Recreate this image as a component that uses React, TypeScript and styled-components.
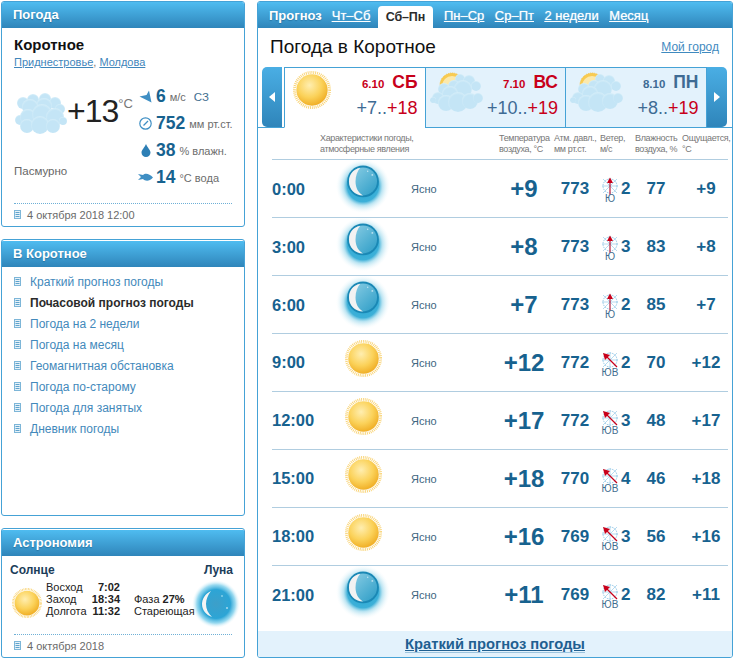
import React, { useId } from "react";
import styled, { createGlobalStyle } from "styled-components";

const Global = createGlobalStyle`
  html, body { margin: 0; padding: 0; background: #fff; }
  body { font-family: "Liberation Sans", Arial, sans-serif; color: #333; }
  a { color: inherit; }
`;

const Page = styled.div`
  display: flex;
  gap: 12px;
  width: 733px;
  height: 658px;
  padding: 1px 0 0 1px;
  box-sizing: border-box;
  overflow: hidden;
`;
const Sidebar = styled.div`
  display: flex;
  flex-direction: column;
  width: 244px;
`;
const Panel = styled.section<{ $h: number; $mb?: number }>`
  display: flex;
  flex-direction: column;
  height: ${(p) => p.$h}px;
  margin-bottom: ${(p) => p.$mb ?? 0}px;
  box-sizing: border-box;
  border: 1px solid #45a2d6;
  border-radius: 3px;
  overflow: hidden;
  flex: none;
`;
const PanelHead = styled.h2<{ $gap?: boolean }>`
  margin: ${(p) => (p.$gap ? "1px" : "0")} 0 0;
  height: 26px;
  flex: none;
  padding-left: 11px;
  font-size: 13px;
  line-height: 26px;
  font-weight: bold;
  color: #fff;
  text-shadow: 0 1px 1px rgba(20, 80, 120, 0.45);
  background: linear-gradient(#4fbcf0, #2f85ba);
`;
const Body = styled.div`
  padding: 8px 12px 0;
  flex: 1;
`;
const City = styled.div`
  font-size: 15px;
  line-height: 18px;
  font-weight: bold;
  color: #111;
`;
const Region = styled.div`
  margin-top: 1px;
  font-size: 11px;
  line-height: 15px;
  color: #777;
  a { color: #3f86bb; }
`;
const NowGrid = styled.div`
  display: flex;
  margin-top: 13px;
`;
const NowLeft = styled.div`
  width: 126px;
  flex: none;
`;
const NowTemp = styled.div`
  display: flex;
  align-items: flex-start;
  height: 60px;
  padding-top: 9px;
  box-sizing: border-box;
`;
const CloudSlot = styled.div`
  width: 53px;
  flex: none;
  margin-top: 1px;
`;
const BigTemp = styled.span`
  font-size: 32px;
  line-height: 38px;
  color: #222;
  letter-spacing: -1px;
`;
const Degree = styled.span`
  font-size: 13px;
  line-height: 18px;
  color: #777;
  margin-top: 3px;
`;
const Cond = styled.div`
  margin-top: 21px;
  font-size: 11.5px;
  line-height: 14px;
  color: #666;
`;
const DetailList = styled.div`
  display: flex;
  flex-direction: column;
`;
const Detail = styled.div`
  display: flex;
  align-items: center;
  height: 27px;
  font-size: 11px;
  color: #6d6d6d;
  white-space: nowrap;
`;
const DetailIcon = styled.span`
  display: flex;
  justify-content: center;
  width: 15px;
  margin-right: 3px;
  margin-left: -2px;
`;
const DetailValue = styled.b`
  font-size: 17.5px;
  color: #17628f;
  margin-right: 4px;
`;
const WindDir = styled.span`
  color: #3f6e8f;
  font-size: 11.5px;
  margin-left: 8px;
`;
const Stamp = styled.div`
  display: flex;
  align-items: center;
  gap: 6px;
  margin: 0 12px;
  height: 21px;
  padding-bottom: 1px;
  box-sizing: content-box;
  border-top: 1px dotted #6fb0d6;
  font-size: 11px;
  color: #6a6a6a;
  flex: none;
`;
const Menu = styled.ul`
  list-style: none;
  margin: 0;
  padding: 4px 0 0 12px;
`;
const MenuItem = styled.li<{ $active?: boolean }>`
  display: flex;
  align-items: center;
  gap: 9px;
  height: 21px;
  font-size: 12px;
  font-weight: ${(p) => (p.$active ? "bold" : "normal")};
  color: ${(p) => (p.$active ? "#2b2b2b" : "#4389bb")};
`;
const AstroBody = styled.div`
  flex: 1;
  position: relative;
  padding: 6px 8px 0;
`;
const AstroTitles = styled.div`
  display: flex;
  justify-content: space-between;
  padding-right: 3px;
  font-size: 12px;
  line-height: 16px;
  font-weight: bold;
  color: #1b3d5a;
`;
const AstroRow = styled.div`
  display: flex;
  margin-top: 3px;
`;
const SunSlot = styled.div`
  width: 36px;
  flex: none;
  box-sizing: border-box;
  padding: 7px 0 0 2px;
`;
const AstroTable = styled.div`
  font-size: 11px;
  line-height: 12px;
  color: #222;
  width: 74px;
  flex: none;
`;
const AstroLine = styled.div`
  display: flex;
  justify-content: space-between;
  white-space: nowrap;
  b { color: #222; font-size: 11px; }
`;
const Phase = styled.div`
  margin: 12px 0 0 14px;
  font-size: 11px;
  line-height: 12px;
  color: #222;
  white-space: nowrap;
`;
const MoonOver = styled.div`
  position: absolute;
  right: 4px;
  top: 24px;
`;

const Main = styled.section`
  display: flex;
  flex-direction: column;
  width: 476px;
  height: 657px;
  box-sizing: border-box;
  border: 1px solid #45a2d6;
  border-radius: 3px;
  overflow: hidden;
  flex: none;
`;
const TabBar = styled.nav`
  display: flex;
  align-items: flex-end;
  height: 26px;
  flex: none;
  padding-left: 11px;
  font-size: 13px;
  color: #fff;
  background: linear-gradient(#4fbcf0, #2f85ba);
`;
const TabLabel = styled.b`
  line-height: 24px;
  margin-right: 10px;
  text-shadow: 0 1px 1px rgba(20, 80, 120, 0.45);
`;
const TabLink = styled.a`
  line-height: 24px;
  margin-right: 10.500px;
  color: #fff;
  text-shadow: 0 0 1px rgba(255, 255, 255, 0.7);
`;
const TabActive = styled.span`
  height: 22px;
  width: 55px;
  margin: 0 11px 0 -3px;
  text-align: center;
  line-height: 22px;
  border-radius: 4px 4px 0 0;
  background: #fff;
  color: #2b2b2b;
  font-weight: bold;
  font-size: 12.500px;
  letter-spacing: -0.1px;
`;
const TitleRow = styled.div`
  display: flex;
  align-items: center;
  justify-content: space-between;
  height: 39px;
  flex: none;
  padding: 0 13px 2px 12px;
  box-sizing: border-box;
`;
const PageTitle = styled.h1`
  margin: 0;
  font-size: 19px;
  line-height: 24px;
  font-weight: normal;
  color: #111;
`;
const MyCity = styled.a`
  font-size: 12px;
  color: #3f8abf;
`;
const Strip = styled.div`
  display: flex;
  height: 61px;
  flex: none;
  padding-left: 4px;
  box-shadow: inset 0 -1px 0 #45a2d6;
`;
const Arrow = styled.div<{ $side: "left" | "right" }>`
  display: flex;
  align-items: center;
  justify-content: center;
  width: 20px;
  height: 60px;
  flex: none;
  margin: ${(p) => (p.$side === "left" ? "0 2px 0 0" : "0 0 0 1.5px")};
  background: linear-gradient(#4aaee4, #2f85ba);
  border-radius: ${(p) => (p.$side === "left" ? "5px 0 0 5px" : "0 5px 5px 0")};
`;
const Day = styled.div<{ $active?: boolean }>`
  display: flex;
  justify-content: space-between;
  width: 141.500px;
  box-sizing: border-box;
  height: 61px;
  flex: none;
  margin-right: -1px;
  padding: 0 7px 0 3px;
  border: 1px solid #45a2d6;
  border-bottom: ${(p) => (p.$active ? "1px solid #fff" : "1px solid #45a2d6")};
  background: ${(p) => (p.$active ? "#fff" : "#e3f2fc")};
`;
const DayIcon = styled.div<{ $sun?: boolean }>`
  margin: ${(p) => (p.$sun ? "3px 0 0 5px" : "3px 0 0 1px")};
`;
const DayInfo = styled.div`
  display: flex;
  flex-direction: column;
  align-items: flex-end;
`;
const DayHead = styled.div<{ $red: boolean }>`
  display: flex;
  align-items: baseline;
  gap: 8px;
  height: 30px;
  padding-top: 4px;
  box-sizing: border-box;
  font-weight: bold;
  color: ${(p) => (p.$red ? "#c8001a" : "#3e6b94")};
`;
const DayDate = styled.span`
  font-size: 11.500px;
`;
const DayName = styled.span`
  font-size: 17.500px;
  line-height: 20px;
`;
const DayTemps = styled.div`
  font-size: 18px;
  line-height: 20px;
  color: #3e6b94;
  white-space: nowrap;
  span { color: #c8001a; }
`;
const ColumnHead = styled.div`
  display: grid;
  grid-template-columns: 179px 55px 46px 35px 47px 50px;
  height: 31px;
  flex: none;
  padding: 5px 0 0 62px;
  box-sizing: border-box;
  font-size: 9px;
  line-height: 11px;
  color: #777;
  letter-spacing: -0.35px;
  white-space: nowrap;
`;
const Rows = styled.div`
  flex: 1;
  padding: 0 4px 0 14px;
`;
const Row = styled.div`
  display: grid;
  grid-template-columns: 48px 86px 88px 60px 42px 40px 40px 52px;
  align-items: center;
  height: 58px;
  box-sizing: border-box;
  border-top: 1px solid #b0cde0;
  color: #17628f;
  font-weight: bold;
  font-size: 17px;
`;
const Time = styled.div`
  font-size: 16.500px;
`;
const IconCell = styled.div<{ $lift: number }>`
  display: flex;
  justify-content: center;
  padding-bottom: ${(p) => p.$lift}px;
`;
const Phenom = styled.div`
  padding-left: 5px;
  font-size: 11px;
  font-weight: normal;
  color: #40667f;
`;
const TempCell = styled.div`
  font-size: 24px;
  text-align: center;
`;
const Centered = styled.div`
  text-align: center;
`;
const WindCell = styled.div`
  display: flex;
  align-items: center;
  padding-left: 5px;
`;
const Dial = styled.div`
  position: relative;
  width: 18px;
  height: 18px;
  flex: none;
  margin: -6px 2px 0 0;
`;
const DialLabel = styled.span`
  position: absolute;
  left: 50%;
  top: 16px;
  transform: translateX(-50%);
  font-size: 10px;
  line-height: 12px;
  font-weight: normal;
  color: #3f6e8f;
`;
const Feels = styled.div`
  text-align: center;
  padding-left: 8px;
`;
const Foot = styled.div`
  height: 26px;
  flex: none;
  display: flex;
  align-items: center;
  justify-content: center;
  background: #e3f2fc;
`;
const FootLink = styled.a`
  font-size: 14.750px;
  line-height: 16px;
  font-weight: bold;
  color: #1f6091;
  border-bottom: 1px solid #9cc4de;
`;

const DocIcon = () => (
  <svg width="7" height="9" viewBox="0 0 7 9" style={{ flex: "none" }}>
    <rect x="0.5" y="0.5" width="6" height="8" fill="#e6f2f9" stroke="#7db6d8" />
    <path d="M1.5 2.5h4M1.5 4.5h4M1.5 6.5h4" stroke="#5fa3cc" strokeWidth="1" />
  </svg>
);

const Sun = ({ size = 40 }: { size?: number }) => {
  const id = useId();
  return (
    <svg width={size} height={size} viewBox="0 0 40 40">
      <defs>
        <radialGradient id={id} cx="0.42" cy="0.35" r="0.7">
          <stop offset="0" stopColor="#ffeeb0" />
          <stop offset="0.55" stopColor="#fbd25a" />
          <stop offset="1" stopColor="#eea91e" />
        </radialGradient>
      </defs>
      <circle cx="20" cy="20" r="18.500" fill="none" stroke="#f9d477" strokeWidth="3" strokeDasharray="1 1" />
      <circle cx="20" cy="20" r="16.500" fill={`url(#${id})`} />
    </svg>
  );
};

const Moon = ({ size = 60 }: { size?: number }) => {
  const id = useId();
  return (
    <svg width={size} height={size} viewBox="0 0 60 60">
      <defs>
        <radialGradient id={`${id}g`}>
          <stop offset="0" stopColor="#22a5d2" />
          <stop offset="0.58" stopColor="#3db0d8" />
          <stop offset="0.72" stopColor="#a5dcee" stopOpacity="0.75" />
          <stop offset="1" stopColor="#eef9fc" stopOpacity="0" />
        </radialGradient>
        <linearGradient id={`${id}d`} x1="0" y1="0" x2="1" y2="1">
          <stop offset="0" stopColor="#8fd0e6" />
          <stop offset="1" stopColor="#2b9cc6" />
        </linearGradient>
      </defs>
      <ellipse cx="30" cy="28" rx="29" ry="29" fill={`url(#${id}g)`} />
      <circle cx="30" cy="23" r="17" fill="#1a88b5" />
      <circle cx="30" cy="23" r="15" fill={`url(#${id}d)`} />
      <path d="M27 8.300C19 10 15 16 15 23c0 8 6 15 15 15-5-3-8-8-8-15 0-6 2-11 5-14.700Z" fill="#f2f2f2" />
      <circle cx="40" cy="16" r="1" fill="#e5f5fb" opacity="0.7" />
      <circle cx="35" cy="12" r="0.8" fill="#e5f5fb" opacity="0.7" />
    </svg>
  );
};

const AstroMoon = () => {
  const id = useId();
  return (
    <svg width="48" height="48" viewBox="0 0 48 48">
      <defs>
        <radialGradient id={id}>
          <stop offset="0" stopColor="#3d9fc9" />
          <stop offset="0.6" stopColor="#2ca5d6" />
          <stop offset="0.8" stopColor="#7fd0ec" stopOpacity="0.8" />
          <stop offset="1" stopColor="#e6f6fb" stopOpacity="0" />
        </radialGradient>
      </defs>
      <circle cx="24" cy="24" r="24" fill={`url(#${id})`} />
      <path d="M19 11C13 14 10 19 10 24c0 6 4 11 10 13-4-4-6-8-6-13 0-5 2-9 5-13Z" fill="#f4f4f4" />
      <circle cx="35" cy="28" r="0.8" fill="#fff" />
      <circle cx="30" cy="16" r="0.7" fill="#dff" />
    </svg>
  );
};

const Puffs = ({ puffs, fill }: { puffs: [number, number, number][]; fill: string }) => (
  <>
    {puffs.map(([x, y, r], i) => (
      <circle key={i} cx={x} cy={y} r={r} fill={fill} />
    ))}
  </>
);

const CloudGradient = ({ id }: { id: string }) => (
  <radialGradient id={id} cx="0.5" cy="0.55" r="0.55">
    <stop offset="0" stopColor="#c4e5f6" />
    <stop offset="0.75" stopColor="#c4e5f6" />
    <stop offset="1" stopColor="#d6eef9" />
  </radialGradient>
);

const Cloud = () => {
  const id = useId();
  return (
    <svg width="54" height="42" viewBox="0 0 54 42">
      <defs>
        <CloudGradient id={id} />
      </defs>
      <Puffs
        fill={`url(#${id})`}
        puffs={[
          [9, 10, 6], [19, 7, 6], [31, 6, 6], [41, 10, 6], [46, 16, 5], [30, 13, 8], [16, 14, 8],
          [6, 27, 5], [14, 24, 8], [28, 21, 10], [41, 24, 9], [13, 33, 7], [26, 32, 9], [39, 33, 7], [49, 28, 4],
        ]}
      />
    </svg>
  );
};

const SunCloud = () => {
  const id = useId();
  return (
    <svg width="54" height="42" viewBox="0 0 54 42">
      <defs>
        <CloudGradient id={id} />
      </defs>
      <circle cx="22" cy="14" r="12" fill="#f8cb52" stroke="#f5c54e" strokeDasharray="1 1" />
      <circle cx="22" cy="15" r="10" fill="#fbe9ad" />
      <Puffs
        fill={`url(#${id})`}
        puffs={[
          [30, 8, 5], [39, 10, 6], [46, 15, 5], [24, 15, 6], [14, 18, 6], [33, 18, 9], [20, 23, 8],
          [8, 27, 6], [16, 32, 8], [28, 31, 10], [40, 30, 8], [48, 27, 5], [3, 29, 3],
        ]}
      />
    </svg>
  );
};

const WindDial = ({ dir }: { dir: "Ю" | "ЮВ" }) => (
  <Dial>
    <svg width="18" height="18" viewBox="0 0 18 18">
      <g stroke="#8fc6e6" strokeWidth="1" fill="none">
        <circle cx="9" cy="9" r="7" strokeDasharray="1.500 1" />
        <path d="M2 2l14 14M16 2 2 16M1 9h16M9 1v16" strokeOpacity="0.65" />
      </g>
      {dir === "Ю" ? (
        <g fill="#c8001a" stroke="#c8001a">
          <path d="M9 4v14" strokeWidth="1" />
          <path d="M9 0.500l3 5.500H6z" stroke="none" />
        </g>
      ) : (
        <g fill="#c8001a" stroke="#c8001a">
          <path d="M5 5l11 11" strokeWidth="1.200" />
          <path d="M2 2l7 2-5 5z" stroke="none" />
        </g>
      )}
    </svg>
    <DialLabel>{dir}</DialLabel>
  </Dial>
);

const Chevron = ({ dir }: { dir: "left" | "right" }) => (
  <svg width="6" height="10" viewBox="0 0 6 10">
    <path d={dir === "left" ? "M6 0v10L0 5z" : "M0 0v10l6-5z"} fill="#fff" />
  </svg>
);

const ICON_BLUE = "#3f8fc4";

const days = [
  { date: "6.10", name: "СБ", lo: "+7", hi: "+18", red: true, active: true },
  { date: "7.10", name: "ВС", lo: "+10", hi: "+19", red: true, active: false },
  { date: "8.10", name: "ПН", lo: "+8", hi: "+19", red: false, active: false },
];

type Hour = { t: string; icon: "moon" | "sun"; temp: string; p: number; dir: "Ю" | "ЮВ"; w: number; h: number };
const hours: Hour[] = [
  { t: "0:00", icon: "moon", temp: "+9", p: 773, dir: "Ю", w: 2, h: 77 },
  { t: "3:00", icon: "moon", temp: "+8", p: 773, dir: "Ю", w: 3, h: 83 },
  { t: "6:00", icon: "moon", temp: "+7", p: 773, dir: "Ю", w: 2, h: 85 },
  { t: "9:00", icon: "sun", temp: "+12", p: 772, dir: "ЮВ", w: 2, h: 70 },
  { t: "12:00", icon: "sun", temp: "+17", p: 772, dir: "ЮВ", w: 3, h: 48 },
  { t: "15:00", icon: "sun", temp: "+18", p: 770, dir: "ЮВ", w: 4, h: 46 },
  { t: "18:00", icon: "sun", temp: "+16", p: 769, dir: "ЮВ", w: 3, h: 56 },
  { t: "21:00", icon: "moon", temp: "+11", p: 769, dir: "ЮВ", w: 2, h: 82 },
];

const menu = [
  "Краткий прогноз погоды",
  "Почасовой прогноз погоды",
  "Погода на 2 недели",
  "Погода на месяц",
  "Геомагнитная обстановка",
  "Погода по-старому",
  "Погода для занятых",
  "Дневник погоды",
];

export default function App() {
  return (
    <Page>
      <Global />
      <Sidebar>
        <Panel $h={226} $mb={12}>
          <PanelHead>Погода</PanelHead>
          <Body>
            <City>Коротное</City>
            <Region>
              <a href="#r">Приднестровье</a>, <a href="#m">Молдова</a>
            </Region>
            <NowGrid>
              <NowLeft>
                <NowTemp>
                  <CloudSlot>
                    <Cloud />
                  </CloudSlot>
                  <BigTemp>+13</BigTemp>
                  <Degree>°C</Degree>
                </NowTemp>
                <Cond>Пасмурно</Cond>
              </NowLeft>
              <DetailList>
                <Detail>
                  <DetailIcon>
                    <svg width="13" height="13" viewBox="0 0 13 13">
                      <path d="M12.500 12.500 10 0.500 7.500 5 0.500 6.500Z" fill={ICON_BLUE} />
                    </svg>
                  </DetailIcon>
                  <DetailValue>6</DetailValue>м/с
                  <WindDir>СЗ</WindDir>
                </Detail>
                <Detail>
                  <DetailIcon>
                    <svg width="13" height="13" viewBox="0 0 13 13">
                      <circle cx="6.500" cy="6.500" r="5.700" fill="none" stroke={ICON_BLUE} strokeWidth="1.200" />
                      <path d="M4.500 8.500 9 4" stroke={ICON_BLUE} strokeWidth="1.200" />
                    </svg>
                  </DetailIcon>
                  <DetailValue>752</DetailValue>мм рт.ст.
                </Detail>
                <Detail>
                  <DetailIcon>
                    <svg width="10" height="13" viewBox="0 0 10 13">
                      <path d="M5 0C4 3 .5 6 .5 8.500a4.500 4.500 0 0 0 9 0C9.500 6 6 3 5 0Z" fill="#2d7fb5" />
                    </svg>
                  </DetailIcon>
                  <DetailValue>38</DetailValue>% влажн.
                </Detail>
                <Detail>
                  <DetailIcon>
                    <svg width="15" height="9" viewBox="0 0 15 9">
                      <path d="M0 1l3 3-3 3 5-1c2 2 6 3 10-1.500C11 0 7 0 5 2Z" fill={ICON_BLUE} />
                    </svg>
                  </DetailIcon>
                  <DetailValue>14</DetailValue>°C вода
                </Detail>
              </DetailList>
            </NowGrid>
          </Body>
          <Stamp>
            <DocIcon />4 октября 2018 12:00
          </Stamp>
        </Panel>

        <Panel $h={277} $mb={12}>
          <PanelHead $gap>В Коротное</PanelHead>
          <Menu>
            {menu.map((m, i) => (
              <MenuItem key={m} $active={i === 1}>
                <DocIcon />
                {m}
              </MenuItem>
            ))}
          </Menu>
        </Panel>

        <Panel $h={130}>
          <PanelHead $gap>Астрономия</PanelHead>
          <AstroBody>
            <AstroTitles>
              <span>Солнце</span>
              <span>Луна</span>
            </AstroTitles>
            <AstroRow>
              <SunSlot>
                <Sun size={30} />
              </SunSlot>
              <AstroTable>
                <AstroLine>
                  Восход <b>7:02</b>
                </AstroLine>
                <AstroLine>
                  Заход <b>18:34</b>
                </AstroLine>
                <AstroLine>
                  Долгота <b>11:32</b>
                </AstroLine>
              </AstroTable>
              <Phase>
                Фаза <b>27%</b>
                <br />
                Стареющая
              </Phase>
            </AstroRow>
            <MoonOver>
              <AstroMoon />
            </MoonOver>
          </AstroBody>
          <Stamp>
            <DocIcon />4 октября 2018
          </Stamp>
        </Panel>
      </Sidebar>

      <Main>
        <TabBar>
          <TabLabel>Прогноз</TabLabel>
          <TabLink href="#a">Чт–Сб</TabLink>
          <TabActive>Сб–Пн</TabActive>
          <TabLink href="#b">Пн–Ср</TabLink>
          <TabLink href="#c">Ср–Пт</TabLink>
          <TabLink href="#d">2 недели</TabLink>
          <TabLink href="#e">Месяц</TabLink>
        </TabBar>
        <TitleRow>
          <PageTitle>Погода в Коротное</PageTitle>
          <MyCity href="#city">Мой город</MyCity>
        </TitleRow>
        <Strip>
          <Arrow $side="left">
            <Chevron dir="left" />
          </Arrow>
          {days.map((d) => (
            <Day key={d.date} $active={d.active}>
              <DayIcon $sun={d.active}>{d.active ? <Sun size={38} /> : <SunCloud />}</DayIcon>
              <DayInfo>
                <DayHead $red={d.red}>
                  <DayDate>{d.date}</DayDate>
                  <DayName>{d.name}</DayName>
                </DayHead>
                <DayTemps>
                  {d.lo}..<span>{d.hi}</span>
                </DayTemps>
              </DayInfo>
            </Day>
          ))}
          <Arrow $side="right">
            <Chevron dir="right" />
          </Arrow>
        </Strip>
        <ColumnHead>
          <div>Характеристики погоды,<br />атмосферные явления</div>
          <div>Температура<br />воздуха, °C</div>
          <div>Атм. давл.,<br />мм рт.ст.</div>
          <div>Ветер,<br />м/с</div>
          <div>Влажность<br />воздуха, %</div>
          <div>Ощущается,<br />°C</div>
        </ColumnHead>
        <Rows>
          {hours.map((h) => (
            <Row key={h.t}>
              <Time>{h.t}</Time>
              <IconCell $lift={h.icon === "moon" ? 2 : 9}>
                {h.icon === "moon" ? <Moon size={56} /> : <Sun size={37} />}
              </IconCell>
              <Phenom>Ясно</Phenom>
              <TempCell>{h.temp}</TempCell>
              <Centered>{h.p}</Centered>
              <WindCell>
                <WindDial dir={h.dir} />
                {h.w}
              </WindCell>
              <Centered>{h.h}</Centered>
              <Feels>{h.temp}</Feels>
            </Row>
          ))}
        </Rows>
        <Foot>
          <FootLink href="#short">Краткий прогноз погоды</FootLink>
        </Foot>
      </Main>
    </Page>
  );
}
